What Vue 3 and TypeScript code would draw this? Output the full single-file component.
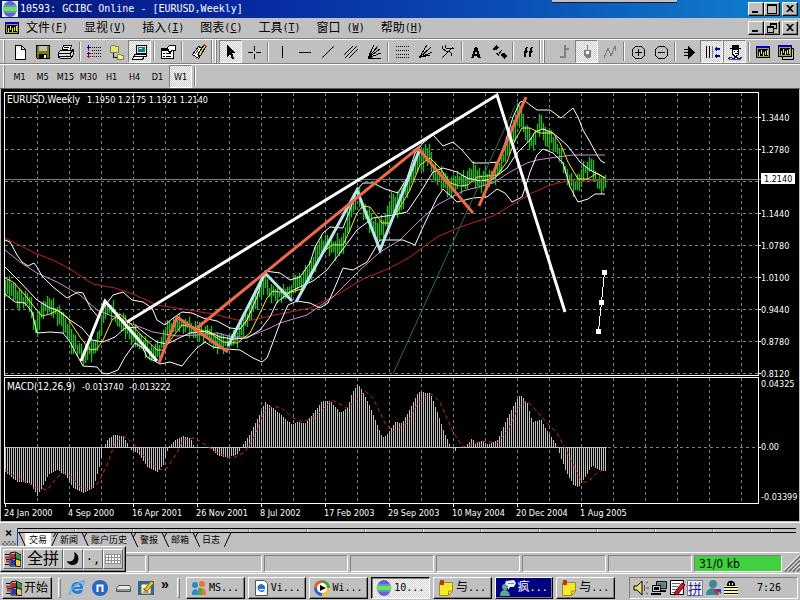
<script setup lang="ts">
interface Shape { d: string; f?: string; s?: string; w?: number }
interface Tool { kind: 'button' | 'sep' | 'wide' | 'grip'; icon?: string; label?: string; on?: boolean }

const K = '#000'
const icons: Record<string, Shape[]> = {
  doc: [{ d: 'M3.5 1.5h6l4 4v9.5h-10z', f: '#fff', s: K }, { d: 'M9.5 1.5v4h4', s: K }],
  save: [{ d: 'M1.5 1.5h13v13h-12l-1-1z', f: '#808000', s: K }, { d: 'M4 2h8v5h-8z', f: '#c0c0c0' }, { d: 'M4 10h8v4h-8z', f: K }, { d: 'M9 11h2v3h-2z', f: '#fff' }],
  print: [{ d: 'M5.5 1.5h8l-2 6h-8z', f: '#fff', s: K }, { d: 'M6 3.5h5M5 5.5h5', s: K }, { d: 'M.5 8.5l2-2h11l2-1v5l-3 4h-10l-2-1.5z', f: '#e0e0e0', s: K }, { d: 'M1 9.5h11l3-3M1 12.5h11v-3', s: K }, { d: 'M8 11h2v1h-2z', f: '#c8c800' }],
  list: [{ d: 'M2.500 1v5M0.500 3.500h4', s: '#00a' }, { d: 'M2.500 5v2M2.500 11v3M0.500 12.500h4', s: '#c00' }, { d: 'M2.500 8v3M0.500 9.500h4', s: '#00a' }, { d: 'M6 3h1v1h-1zM8 3h1v1h-1zM10 3h1v1h-1zM12 3h1v1h-1zM14 3h1v1h-1zM6 6h1v1h-1zM8 6h1v1h-1zM10 6h1v1h-1zM12 6h1v1h-1zM14 6h1v1h-1zM6 9h1v1h-1zM8 9h1v1h-1zM10 9h1v1h-1zM12 9h1v1h-1zM14 9h1v1h-1zM6 12h1v1h-1zM8 12h1v1h-1zM10 12h1v1h-1zM12 12h1v1h-1zM14 12h1v1h-1z', f: K }],
  folders: [{ d: 'M1.5 2.500l1-1h3l1 1h3v6h-8z', f: '#e8e070', s: '#808040' }, { d: 'M4.500 9v4.500h4', s: K }, { d: 'M8.500 11.500l1-1h2l1 1h2v3.500h-6z', f: '#f4ee98', s: '#808040' }],
  computer: [{ d: 'M4.5 1.500h10v8h-10z', f: '#e8e8e8', s: K }, { d: 'M6 3h7v5h-7z', f: '#008080' }, { d: 'M7 4h3v1h-3z', f: '#fff' }, { d: 'M2.500 10.500h12v2h-12zM1.500 12.500h11l-2 2.500h-10z', f: '#fff', s: K }],
  props: [{ d: 'M1.500 4.500h12v10h-12z', f: '#fff', s: K }, { d: 'M2 5h8v2h-8z', f: K }, { d: 'M3 9.500h2M6 9.500h5M3 12.500h2M6 12.500h5', s: K }, { d: 'M7.500 3.500l2-2h6v5h-4l-1 2-2-1z', f: '#fff', s: K }],
  edit: [{ d: 'M1.500 10.500l6-8 6 3-6 9z', f: '#fff', s: K }, { d: 'M4 10l4-5M6 11l4-5M8 12l3-5', s: '#555' }, { d: 'M7 10l6-9 2 1-5 9-3 2z', f: '#e8d820', s: K }, { d: 'M12 1l1-1 3 2-1 2z', f: '#c03030' }],
  cursor: [{ d: 'M4 1v12l3-3 2 5h2v-1l-2-5h4z', f: K }],
  cross: [{ d: 'M8.500 2v5M8.500 10v5M2 8.500h5M10 8.500h5', s: K }],
  vline: [{ d: 'M8.500 2v12', s: K }],
  hline: [{ d: 'M2 8.500h12', s: K }],
  trend: [{ d: 'M2 14L14 2', s: K }],
  channel: [{ d: 'M1 11l9-9M2 14L14 2M6 14l9-9', s: K }],
  fan: [{ d: 'M2 14L8 1M2 14L12 2M2 14L14 5M2 14L15 9M2 14h13M2 14L6 5', s: K }, { d: 'M2 14h4v-3z', f: K }],
  grid: [{ d: 'M1 2h14v1h-14zM1 6h14v1h-14zM1 10h14v1h-14zM1 13h14v1h-14z', f: 'dots' }],
  fan2: [{ d: 'M2 14L10 1M2 14L14 3M2 14L15 8M4 13l9-2', s: K }],
  fork: [{ d: 'M2 14L13 3M2 2l1 3 3 2 3 0 2 2 0 3M5 1l1 3 3 1 5-1', s: K }],
  text: [{ d: 'M3 14L7 3h2l4 11h-3l-.7-2H6.600L6 14zM7 10h2L8 6z', f: K }],
  arrows: [{ d: 'M1 5l4-4 3 3-2 1 0 1H3zM9 11l2-1 0-1 2 0 3 3-3 3z', f: K }, { d: 'M5.500 9l2 2 3-5', s: K }],
  func: [{ d: 'M5 13l2-9 2-1M5 7.500h4M10 13l2-9 2-1M10 7.500h4', s: K }, { d: 'M6 13l2-9M11 13l2-9', s: K }],
  bars: [{ d: 'M8.500 1v13M9 4.500h4M4 12.500h4', s: '#808080', w: 2 }],
  candle: [{ d: 'M8.500 1v14', s: '#808080' }, { d: 'M5 6h7v6l-2 2h-3l-2-2z', f: '#808080' }, { d: 'M7 7h3v3h-3z', f: '#fff' }],
  zigzag: [{ d: 'M2 14l4-10 3 8 4-10 1 5', s: '#808080' }],
  plus: [{ d: 'M5.500 2.500h6l3 3v6l-3 3h-6l-3-3v-6z', s: K }, { d: 'M8.500 5v7M5 8.500h7', s: K }],
  minus: [{ d: 'M5.500 2.500h6l3 3v6l-3 3h-6l-3-3v-6z', s: K }, { d: 'M5 8.500h7', s: K }],
  play: [{ d: 'M7 2l7 6.500-7 6.500z', f: K }, { d: 'M3 5.500h4M3 8.500h4M3 11.500h4', s: K }],
  scroll: [{ d: 'M2.500 2v12M5.500 2v12', s: K }, { d: 'M8.500 2v12', s: '#808080' }, { d: 'M10 5l3-3v2h3v2h-3v2zM10 12l3-3v2h3v2h-3v2z', f: '#000090' }],
  person: [{ d: 'M5 1h7v3h2v1H3V4h2z', f: K }, { d: 'M5.500 5.500h6v5l-2 1.500h-2l-2-2z', f: '#fff', s: K }, { d: 'M7 7h1v1H7zM10 7h1v1h-1zM8 9h3v1H8z', f: K }, { d: 'M1 15l3-2 2 2 3-2 3 2 3-2', s: '#1010a0' }, { d: 'M2 15h12', s: '#4848c0' }],
  chart: [{ d: 'M1.500 2.500h13v11h-13z', f: K, s: K }, { d: 'M1 2h14v2h-14z', f: '#0000d0' }, { d: 'M2.500 4.500h11v8h-11z', f: K, s: '#a0a060' }, { d: 'M4.500 8v4M6.500 6v4M8.500 8v4M10.500 7v4M12.500 6v5', s: '#f0f020' }],
  charts: [{ d: 'M4.500 4.500h11v11h-11z', f: '#c0c0c0', s: K }, { d: 'M.5 1.500h13v11h-13z', f: K, s: K }, { d: 'M0 1h14v2h-14z', f: '#0000d0' }, { d: 'M1.500 3.500h11v8h-11z', s: '#a0a060' }, { d: 'M3.500 7v4M5.500 5v4M7.500 7v4M9.500 6v4M11.500 5v5', s: '#f0f020' }],
  globe: [{ d: 'M8 0a7 8 0 0 1 0 16A7 8 0 0 1 8 0z', f: '#6464c8' }, { d: 'M1 6h14v4H1z', f: '#58f048' }, { d: 'M2 5h12M2 11h12', s: '#8cb0e0' }],
  win: [{ d: 'M6 3l4 0v5l-4 0z', f: '#d02020' }, { d: 'M11 3l4 1v5l-4-1z', f: '#20a030' }, { d: 'M6 9h4v5h-4z', f: '#2030d0' }, { d: 'M11 9l4 1v5l-4-1z', f: '#f0d020' }, { d: 'M5 2l5-1 6 3v12l-5-1-6 0zM10.500 2v13M5 8.500l5-1 6 2', s: K }, { d: 'M0 3.500h4M1 8.500h3M0 13.500h4', s: K, w: 1 }, { d: 'M0 6.500h4M1 10.500h3', s: '#d02020', w: 2 }],
  ie: [{ d: 'M8 2a6 6 0 1 0 6 8h-4a3 3 0 0 1-5-1h9a6 6 0 0 0-6-7zM5 7a3 3 0 0 1 6 0z', f: '#2080d8' }, { d: 'M1 15C-1 11 10 1 15 1c1 0 0 3-1 4', s: '#50b0f0', w: 1.500 }],
  mx: [{ d: 'M8 0a8 8 0 1 1 0 16A8 8 0 0 1 8 0z', f: '#2868c0' }, { d: 'M5.500 12V5.500h5V12', s: '#fff', w: 2 }],
  drive: [{ d: 'M1.500 8.500l2-3h11l1 2v4h-14z', f: '#e8e8e8', s: '#505050' }, { d: 'M2 9h13v2h-13z', f: '#909090' }, { d: 'M12 9h2v1h-2z', f: '#20d020' }],
  desk: [{ d: 'M0 1h16v14H0z', f: '#2868a0' }, { d: 'M3 4h10v10H3z', f: '#fff8d0', s: '#806020' }, { d: 'M5 12h6M5 9h4', s: '#555' }, { d: 'M6 10l7-9 3 2-7 8z', f: '#f0c030', s: '#806010' }],
  msn: [{ d: 'M4 2a3 3 0 1 1 0 6 3 3 0 0 1 0-6M1 15c-1-6 6-9 7 0z', f: '#2888d0' }, { d: 'M11 1a3 3 0 1 1 0 6 3 3 0 0 1 0-6M7 15c-1-9 9-9 8 0z', f: '#e87830' }, { d: 'M7 9c2-3 5 0 4 6H6z', f: '#48a848' }],
  page: [{ d: 'M2.500.5h9l3 3v12h-12z', f: '#fff', s: '#555' }, { d: 'M8 4a4 4 0 1 0 4 6H9a2 2 0 0 1-3-1h6a4 4 0 0 0-4-5', f: '#2070d0' }],
  media: [{ d: 'M8 0a8 8 0 0 1 8 8H8z', f: '#48a040' }, { d: 'M8 0a8 8 0 0 0-8 8h8z', f: '#e06030' }, { d: 'M0 8a8 8 0 0 0 8 8V8z', f: '#2868c0' }, { d: 'M8 16a8 8 0 0 0 8-8H8z', f: '#f0c030' }, { d: 'M8 3a5 5 0 1 1 0 10A5 5 0 0 1 8 3', f: '#fff' }, { d: 'M6 5l6 3-6 3z', f: K }],
  note: [{ d: 'M1.500 2.500h13v9l-4 4h-9z', f: '#f8e828', s: '#a08820' }, { d: 'M10.500 15v-4h4', s: '#a08820' }, { d: 'M2 0h4v5H2z', f: '#c03020' }],
  chat: [{ d: 'M5 4a3 3 0 1 1 0 6 3 3 0 0 1 0-6M0 16c0-8 9-8 10 0z', f: '#58a898' }, { d: 'M6 1l8-1 2 3-2 4-4 0-2 3V6L5 4z', f: '#e8f4ff' }, { d: 'M8 3.500h6', s: '#789' }],
  sound: [{ d: 'M1 6h3l5-5v14l-5-5H1z', f: '#e8e060', s: K }, { d: 'M11.500 5v6M13 3l2-1M13 8h3M13 13l2 1', s: '#505050' }],
  net: [{ d: 'M5.500 1.500h10v7h-10z', f: '#909090', s: K }, { d: 'M7 3h7v4H7z', f: '#40808c' }, { d: 'M1.500 5.500h8v6h-8z', f: '#d0d0d0', s: K }, { d: 'M3 7h5v3H3z', f: K }, { d: 'M0 13h10v2H0zM9 10h6v2H9z', f: K }],
  pad: [{ d: 'M1.500.5h13v14h-13z', f: '#fff', s: K }, { d: 'M3 3.500h8M3 6.500h6M3 9.500h5M3 12.500h4', s: '#666' }, { d: 'M6 12l7-9 3 2-7 9-4 1z', f: '#d01828', s: '#600' }],
  buddy: [{ d: 'M8 0a4 4 0 1 1 0 8 4 4 0 0 1 0-8M1 15c0-9 12-9 13 0z', f: '#388898' }, { d: 'M8 9l7 0-3 6z', f: '#e02020' }, { d: 'M11 9h5v5z', f: '#2040e0' }],
  bee: [{ d: 'M4 6c-1-7 9-7 8 0z', f: K }, { d: 'M6 3h1v2H6zM9 3h1v2H9z', f: '#fff' }, { d: 'M1 6h14v9H1z', f: '#fff8b0' }, { d: 'M1 7.500h14M1 10.500h14M1 13.500h14', s: K, w: 1 }],
  moon: [{ d: 'M9 1c5 2 6 9 2 12-3 2-8 1-9-3 6 2 9-3 7-9z', f: K }],
  keys: [{ d: 'M0 3h16v10H0z', f: '#909090' }, { d: 'M1 5h14M1 8h14M1 11h14', s: '#fff', w: 2 }, { d: 'M3.500 3v10M6.500 3v10M9.500 3v10M12.500 3v10M0 6.500h16M0 9.500h16', s: '#909090' }],
}

const b = (icon: string, label: string, on = false): Tool => ({ kind: 'button', icon, label, on })
const sep: Tool = { kind: 'sep' }
const tools: Tool[] = [
  b('doc', '新图表'), b('save', '保存'), b('print', '打印'), sep,
  b('list', '市场报价'), b('folders', '导航器'), b('computer', '终端', true), sep,
  b('props', '属性'), { kind: 'wide' }, b('edit', '编辑器'), { kind: 'grip' },
  b('cursor', '光标', true), b('cross', '十字线'), sep,
  b('vline', '垂直线'), b('hline', '水平线'), b('trend', '趋势线'), b('channel', '通道'), b('fan', '扇形线'), sep,
  b('grid', '回撤线'), b('fan2', '江恩扇形'), b('fork', '叉形线'), sep,
  b('text', '文字'), b('arrows', '箭头'), sep, b('func', '指标'), { kind: 'grip' }, sep,
  b('bars', '柱状图'), b('candle', '阴阳烛', true), b('zigzag', '折线图'), sep,
  b('plus', '放大'), b('minus', '缩小'), sep,
  b('play', '前进'), b('scroll', '自动滚动', true), b('person', '智能交易', true), sep,
  b('chart', '图表'), b('charts', '图表组'),
]

const menus = [
  ['文件', 'F'], ['显视', 'V'], ['插入', 'I'], ['图表', 'C'], ['工具', 'T'], ['窗口', 'W', ' '], ['帮助', 'H'],
]
const frames = ['M1', 'M5', 'M15', 'M30', 'H1', 'H4', 'D1', 'W1']
const tabs = ['交易', '新闻', '账户历史', '警报', '邮箱', '日志']
const tasks = [
  { icon: 'msn', text: 'MS...' }, { icon: 'page', text: 'Vi...' }, { icon: 'media', text: 'Wi...' },
  { icon: 'globe', text: '10...', state: 'active' }, { icon: 'note', han: '与', text: '...' },
  { icon: 'chat', han: '疯', text: '...', state: 'alert' }, { icon: 'note', han: '与', text: '...' },
]

type Pt = number[]
function lerp(keys: Pt[], x: number, col: number): number {
  for (let i = 1; i < keys.length; i++) {
    if (x <= keys[i][0]) {
      const a = keys[i - 1]
      const c = keys[i]
      return a[col] + ((c[col] - a[col]) * (x - a[0])) / (c[0] - a[0])
    }
  }
  return keys[keys.length - 1][col]
}

// x, high, low
const range: Pt[] = [
  [5, 280, 295], [13, 280, 298], [17, 290, 308], [27, 293, 305], [32, 303, 322], [35, 318, 338], [38, 312, 333], [42, 303, 318], [45, 297, 312],
  [52, 300, 315], [58, 307, 323], [67, 320, 337], [72, 333, 355], [77, 340, 352], [80, 345, 358], [83, 350, 365], [88, 343, 358], [95, 340, 355],
  [100, 323, 338], [105, 303, 316], [112, 303, 315], [118, 312, 327], [125, 318, 335], [133, 327, 343], [143, 337, 352], [150, 346, 359],
  [158, 345, 358], [163, 330, 347], [170, 320, 336], [177, 317, 330], [187, 320, 332], [197, 324, 341], [207, 326, 338], [215, 333, 351],
  [227, 337, 348], [237, 330, 343], [243, 317, 333], [250, 303, 320], [260, 282, 300], [265, 272, 290], [270, 287, 300], [277, 288, 300],
  [287, 288, 299], [295, 275, 290], [303, 273, 287], [312, 257, 277], [320, 237, 253], [327, 238, 250], [335, 240, 257], [343, 233, 253],
  [350, 200, 223], [357, 187, 200], [363, 202, 217], [370, 213, 230], [378, 223, 243], [385, 213, 230], [392, 193, 215], [398, 193, 217],
  [405, 183, 200], [412, 167, 183], [418, 148, 167], [423, 150, 170], [428, 141, 160], [433, 163, 180], [442, 170, 187], [450, 180, 198],
  [458, 172, 188], [465, 175, 190], [472, 163, 180], [478, 170, 190], [488, 172, 187], [497, 166, 178], [507, 140, 157], [515, 112, 137],
  [520, 103, 123], [525, 123, 140], [532, 137, 152], [537, 123, 137], [541, 114, 130], [545, 128, 147], [553, 133, 148], [560, 150, 162],
  [567, 170, 183], [573, 180, 193], [580, 172, 190], [584, 163, 178], [591, 158, 173], [597, 177, 187], [600, 178, 192], [605, 178, 191],
]
const histogram: Pt[] = [
  [5, 472], [17, 482], [30, 483], [37, 496], [43, 485], [48, 475], [57, 470], [65, 475], [72, 487], [83, 493], [93, 488], [100, 463], [103, 447],
  [107, 440], [113, 435], [122, 436], [127, 443], [130, 449], [138, 453], [147, 467], [157, 472], [163, 465], [168, 447], [175, 440], [182, 436],
  [190, 438], [194, 447], [210, 448], [217, 455], [227, 458], [237, 454], [242, 446], [250, 433], [258, 417], [265, 402], [273, 408], [292, 425],
  [297, 422], [305, 423], [313, 413], [322, 401], [330, 401], [340, 413], [347, 408], [352, 392], [358, 384], [363, 393], [370, 407], [377, 425],
  [382, 438], [388, 433], [395, 422], [402, 423], [410, 408], [418, 392], [430, 393], [437, 412], [443, 430], [450, 446], [455, 451], [457, 447],
  [465, 447], [472, 438], [475, 444], [482, 440], [488, 445], [497, 440], [507, 418], [515, 402], [520, 395], [527, 403], [532, 422], [541, 420],
  [545, 428], [555, 443], [558, 450], [565, 470], [573, 485], [578, 488], [585, 477], [592, 465], [598, 470], [605, 471],
]
let priceBars = ''
let macdBars = ''
for (let x = 5, i = 0; x <= 605; x += 2, i++) {
  const up = Math.round(Math.sin(i * 2.3) * 3 + Math.sin(i * 5.1) * 2)
  const down = Math.round(Math.sin(i * 3.7) * 3 + Math.cos(i * 1.9) * 2)
  const top = Math.max(98, Math.round(lerp(range, x, 1)) + up)
  const low = Math.max(top + 5, Math.round(lerp(range, x, 2)) + down)
  priceBars += `M${x} ${top}h1v${low - top}h-1z`
  macdBars += `M${x + 0.5} 447V${Math.round(lerp(histogram, x, 1))}`
}

const curves = [
  { cls: 'red', p: '5,238 23,247 37,254 53,260 70,269 93,284 115,288 133,294 157,305 183,309 213,314 237,320 253,320 270,316 280,314 310,308 340,293 363,279 390,268 410,257 437,237 460,227 493,216 510,206 530,194 550,185 567,181 577,182 587,181 605,180' },
  { cls: 'violet', p: '5,250 20,262 37,273 57,282 80,295 97,310 127,322 153,332 177,336 197,335 217,333 233,337 247,337 258,333 270,328 280,323 307,315 333,297 360,270 380,252 400,240 420,220 437,205 463,191 493,183 510,172 527,163 537,160 557,157 573,155 605,155' },
  { cls: 'band', p: '5,267 20,282 37,300 50,308 57,310 70,320 82,328 92,340 103,342 115,337 125,328 137,327 147,335 157,342 167,344 177,339 190,333 207,331 220,337 233,339 247,338 260,330 270,317 277,302 293,290 313,281 327,270 340,253 357,230 373,218 393,215 407,212 420,193 433,172 443,168 457,172 467,178 480,181 493,179 507,168 517,153 530,140 535,132 543,129 553,133 567,145 580,162 590,170 605,178' },
  { cls: 'band', p: '5,240 10,242 17,255 22,262 28,266 34,263 37,267 42,276 53,287 67,298 78,292 83,293 90,307 98,317 107,303 113,295 123,292 132,300 143,302 152,308 157,320 165,325 173,318 182,312 192,313 203,318 217,321 230,328 240,329 247,320 257,297 265,271 280,273 290,280 300,277 310,263 315,247 323,233 330,227 343,228 350,210 357,190 363,183 373,183 385,189 398,193 407,178 415,153 423,143 433,135 443,146 453,142 462,150 473,163 487,163 498,162 505,143 513,117 520,102 525,101 530,105 537,110 550,110 561,118 573,108 578,117 583,130 590,142 597,155 601,161 605,163' },
  { cls: 'band', p: '5,294 15,302 25,303 32,312 37,333 50,332 63,333 70,342 78,357 83,366 97,367 102,373 108,374 118,370 125,357 135,343 143,348 147,357 160,364 170,362 182,366 188,358 197,348 205,342 213,347 227,349 240,350 253,358 262,362 267,358 273,342 280,323 288,305 297,301 310,303 320,308 328,303 335,287 343,268 353,270 367,262 380,240 403,240 415,245 423,227 437,198 443,189 457,202 473,198 487,197 497,189 505,193 512,202 522,197 527,182 530,172 537,155 543,149 553,153 563,163 570,187 578,202 588,199 595,194 605,194' },
  { cls: 'yellow', p: '5,278 13,282 25,295 35,308 42,316 50,314 58,310 67,317 80,337 90,350 97,349 103,340 112,320 120,314 130,323 143,337 157,350 163,350 172,338 182,325 193,327 213,335 223,342 237,343 250,333 260,313 267,298 273,291 287,293 302,289 313,273 322,253 332,245 343,245 350,230 357,213 363,206 370,207 382,223 390,223 400,207 410,190 420,165 430,158 440,168 450,183 460,186 468,185 477,177 497,175 507,162 515,140 522,128 530,128 540,133 553,133 560,143 568,162 578,179 588,179 597,173 605,178' },
  { cls: 'green', p: '393,374 515,106' },
  { cls: 'thick', p: '81,361 105,301 157,361' },
  { cls: 'thick tomato', p: '159,363 177,317 228,352' },
  { cls: 'thick pale', p: '228,346 265,273 292,301' },
  { cls: 'thick pale', p: '296,302 357,190 380,250 419,151' },
  { cls: 'thick tomato', p: '197,328 418,148 473,213' },
  { cls: 'thick tomato', p: '479,206 526,97' },
  { cls: 'thick', p: '127,322 497,95 565,312' },
  { cls: 'signal', p: '5,470 17,478 27,482 35,487 47,490 55,480 63,472 72,477 80,487 90,489 98,483 107,465 115,443 123,436 132,442 143,455 160,470 167,468 177,453 183,440 195,438 207,446 220,454 233,458 245,452 255,435 264,412 270,407 280,407 293,418 303,422 315,417 332,400 347,408 355,402 365,391 373,398 385,423 393,432 407,423 418,403 430,393 440,402 453,432 463,447 482,441 497,443 508,430 518,408 527,401 533,407 547,423 557,433 567,452 582,482 588,482 598,472 605,469' },
]
const gridX = Array.from({ length: 23 }, (_, i) => 37.5 + i * 32)
const gridY = Array.from({ length: 9 }, (_, i) => 117.5 + i * 32)
const prices = ['1.3440', '1.2780', '', '1.1440', '1.0780', '1.0100', '0.9440', '0.8780', '0.8120']
const dates = ['24 Jan 2000', '4 Sep 2000', '16 Apr 2001', '26 Nov 2001', '8 Jul 2002', '17 Feb 2003', '29 Sep 2003', '10 May 2004', '20 Dec 2004', '1 Aug 2005']
</script>

<template>
  <main class="desktop">
    <svg class="defs" aria-hidden="true"><pattern id="dots" width="2" height="2" patternUnits="userSpaceOnUse"><rect width="1" height="2" /></pattern></svg>
    <header class="title">
      <svg class="ico logo" viewBox="0 0 16 16"><path v-for="(p, i) in icons.globe" :key="i" :d="p.d" :fill="p.f || 'none'" :stroke="p.s || 'none'" /></svg>
      <h1>10593: GCIBC Online - [EURUSD,Weekly]</h1>
      <span class="edge"></span>
      <div class="winbtns">
        <button aria-label="最小化"><svg viewBox="0 0 12 10"><path d="M2 7h6v2H2z" /></svg></button>
        <button aria-label="最大化"><svg viewBox="0 0 12 10"><path d="M1 0h10v10H1zM2 2v7h8V2z" fill-rule="evenodd" /></svg></button>
        <button aria-label="关闭" class="close"><svg viewBox="0 0 12 10"><path d="M2 1h2l2 2 2-2h2L7 4.500 10 8H8L6 6 4 8H2l3-3.500z" /></svg></button>
      </div>
    </header>

    <nav class="menu">
      <svg class="ico" viewBox="0 0 16 16"><path v-for="(p, i) in icons.chart" :key="i" :d="p.d" :fill="p.f || 'none'" :stroke="p.s || 'none'" /></svg>
      <button v-for="m in menus" :key="m[0]">{{ m[0] }}<span class="key">{{ m[2] || '' }}(<u>{{ m[1] }}</u>)</span></button>
      <div class="winbtns">
        <button aria-label="最小化图表"><svg viewBox="0 0 12 10"><path d="M2 7h6v2H2z" /></svg></button>
        <button aria-label="还原图表"><svg viewBox="0 0 12 10"><path d="M4 0h7v6H8v4H1V3h3zM5 2v1h3v2h2V2zM2 5v4h5V5z" fill-rule="evenodd" /></svg></button>
        <button aria-label="关闭图表" class="close"><svg viewBox="0 0 12 10"><path d="M2 1h2l2 2 2-2h2L7 4.500 10 8H8L6 6 4 8H2l3-3.500z" /></svg></button>
      </div>
    </nav>

    <div class="bar tools" role="toolbar" aria-label="工具栏">
      <template v-for="(t, n) in tools" :key="n">
        <button v-if="t.kind === 'button'" :class="{ on: t.on }" :aria-label="t.label" :aria-pressed="t.on">
          <svg class="ico" viewBox="0 0 16 16"><path v-for="(p, i) in icons[t.icon!]" :key="i" :d="p.d" :fill="p.f === 'dots' ? 'url(#dots)' : p.f || 'none'" :stroke="p.s || 'none'" :stroke-width="p.w || 1" /></svg>
        </button>
        <span v-else :class="t.kind"></span>
      </template>
    </div>

    <div class="bar frames" role="toolbar" aria-label="周期">
      <button v-for="f in frames" :key="f" :class="{ on: f === 'W1' }">{{ f }}</button>
      <span class="sep"></span>
    </div>

    <svg class="plot" viewBox="0 89 800 433" role="img" aria-label="EURUSD Weekly">
      <rect x="0" y="89" width="800" height="433" fill="#c0c0c0" />
      <rect x="1" y="89" width="798" height="432" fill="#000" />
      <g class="grid">
        <path v-for="x in gridX" :key="x" :d="`M${x} 93V375M${x} 378V503`" />
        <path v-for="y in gridY" :key="y" :d="`M5 ${y}H758`" />
        <path d="M608 447.500H758" />
      </g>
      <path class="level" d="M5 179.500H762" />
      <path class="candles" :d="priceBars" />
      <path class="macdbars" :d="macdBars + 'M5 447.500H607'" />
      <polyline v-for="(c, i) in curves" :key="i" :class="['curve', c.cls]" :points="c.p" />
      <path class="frame" d="M598.500 331L601.500 302L604.500 272" />
      <path d="M596 329h5v5h-5zM599 300h5v5h-5zM602 270h5v5h-5z" fill="#fff" />
      <path class="frame" d="M4.500 92.500H758.500V375.500H4.500zM4.500 377.500H758.500V503.500H4.500z" />
      <path class="frame" d="M758 117.500h3M758 149.500h3M758 213.500h3M758 245.500h3M758 277.500h3M758 309.500h3M758 341.500h3M758 373.500h3M758 447.500h3" />
      <path v-for="(d, i) in dates" :key="d" class="frame" :d="`M${5.500 + i * 64} 503v4`" />
      <g class="labels">
        <text x="7" y="103" class="name">EURUSD,Weekly</text>
        <text x="87" y="103">1.1950 1.2175 1.1921 1.2140</text>
        <text x="7" y="390" class="name">MACD(12,26,9)</text>
        <text x="82" y="390">-0.013740</text>
        <text x="129" y="390">-0.013222</text>
        <text v-for="(p, i) in prices" :key="i" x="761" :y="121 + i * 32">{{ p }}</text>
        <rect x="761" y="173" width="34" height="11" fill="#fff" />
        <text x="764" y="182" class="now">1.2140</text>
        <text x="761" y="387">0.04325</text>
        <text x="761" y="450">0.00</text>
        <text x="761" y="500">-0.03399</text>
        <text v-for="(d, i) in dates" :key="d" :x="4 + i * 64" y="516">{{ d }}</text>
      </g>
    </svg>

    <section class="terminal">
      <div class="side"><button aria-label="关闭终端">×</button><span></span></div>
      <div class="book">
        <div class="strip"></div>
        <div class="tabs" role="tablist">
          <button v-for="(t, i) in tabs" :key="t" role="tab" :aria-selected="i === 0" :class="{ first: i === 0 }">{{ t }}</button>
        </div>
      </div>
    </section>

    <div class="bottom">
      <div class="ime">
        <span class="cell"><svg class="ico" viewBox="0 0 16 16"><path v-for="(p, i) in icons.win" :key="i" :d="p.d" :fill="p.f || 'none'" :stroke="p.s || 'none'" :stroke-width="p.w || 1" /></svg></span>
        <span class="cell pinyin">全拼</span>
        <span class="cell"><svg class="ico" viewBox="0 0 16 16"><path v-for="(p, i) in icons.moon" :key="i" :d="p.d" :fill="p.f" /></svg></span>
        <span class="cell punct">·,</span>
        <span class="cell"><svg class="ico" viewBox="0 0 16 16"><path v-for="(p, i) in icons.keys" :key="i" :d="p.d" :fill="p.f || 'none'" :stroke="p.s || 'none'" :stroke-width="p.w || 1" /></svg></span>
      </div>
      <footer class="status">
        <span class="help"></span><span class="profile"></span><span v-for="n in 5" :key="n" class="pane"></span>
        <span class="traffic">31/0 kb</span>
        <svg class="size" viewBox="0 0 16 16"><path d="M1 16L16 1M5 16L16 5M9 16l7-7M13 16l3-3" stroke="#707070" stroke-width="2" /><path d="M0 15L15 0M4 15L16 3M8 15l8-8M12 15l4-4" stroke="#fff" /></svg>
      </footer>
    </div>

    <footer class="taskbar">
      <button class="start"><svg class="ico" viewBox="0 0 16 16"><path v-for="(p, i) in icons.win" :key="i" :d="p.d" :fill="p.f || 'none'" :stroke="p.s || 'none'" :stroke-width="p.w || 1" /></svg>开始</button>
      <span class="handle"></span>
      <div class="quick">
        <button v-for="q in ['ie', 'mx', 'drive', 'desk']" :key="q" :aria-label="q"><svg class="ico" viewBox="0 0 16 16"><path v-for="(p, i) in icons[q]" :key="i" :d="p.d" :fill="p.f || 'none'" :stroke="p.s || 'none'" :stroke-width="p.w || 1" /></svg></button>
        <button class="more">»</button>
      </div>
      <span class="handle"></span>
      <div class="tasks">
        <button v-for="(t, n) in tasks" :key="n" :class="t.state"><svg class="ico" viewBox="0 0 16 16"><path v-for="(p, i) in icons[t.icon]" :key="i" :d="p.d" :fill="p.f || 'none'" :stroke="p.s || 'none'" :stroke-width="p.w || 1" /></svg><span>{{ t.han }}<span class="key">{{ t.text }}</span></span></button>
      </div>
      <div class="tray">
        <svg v-for="q in ['sound', 'net', 'pad']" :key="q" class="ico" viewBox="0 0 16 16"><path v-for="(p, i) in icons[q]" :key="i" :d="p.d" :fill="p.f || 'none'" :stroke="p.s || 'none'" /></svg>
        <span class="pin">拼</span>
        <svg v-for="q in ['buddy', 'bee']" :key="q" class="ico" viewBox="0 0 16 16"><path v-for="(p, i) in icons[q]" :key="i" :d="p.d" :fill="p.f || 'none'" :stroke="p.s || 'none'" /></svg>
        <time>7:26</time>
      </div>
    </footer>
  </main>
</template>

<style>
body { background: #c0c0c0; }
</style>

<style scoped>
.desktop { display: flex; flex-direction: column; background: #c0c0c0; color: #000; font: 12px/14px "DejaVu Sans Mono", "Noto Sans CJK SC", monospace; overflow: hidden; }
.desktop * { box-sizing: border-box; }
.defs { position: absolute; width: 0; height: 0; }
button { padding: 0; border: 0; background: none; color: inherit; font: inherit; }
.ico { width: 16px; height: 16px; flex: none; display: block; }
.title { position: relative; display: flex; align-items: center; height: 18px; padding: 0 2px; gap: 2px; background: linear-gradient(90deg, #04187c 0%, #0828a0 30%, #0a4cb4 62%, #1084d0 100%); color: #fff; }
.title h1 { margin: 0; font-size: 10px; line-height: 14px; font-weight: 400; }
.logo { background: #e8ecf8; }
.edge { position: absolute; top: 0; left: 69%; width: 125px; height: 3px; background: #c0c0c0; border-bottom: 1px solid #101830; }
.winbtns { display: flex; margin-left: auto; }
.winbtns button { width: 16px; height: 14px; padding: 1px; background: #c0c0c0; border: 1px solid; border-color: #fff #000 #000 #fff; box-shadow: inset -1px -1px #808080; }
.winbtns svg { display: block; width: 12px; height: 10px; }
.winbtns .close { margin-left: 2px; }
.menu { display: flex; align-items: center; gap: 16px; height: 21px; padding: 0 2px 0 4px; border-bottom: 1px solid #808080; }
.menu > .ico { margin-right: -10px; }
.menu > button { display: flex; align-items: center; white-space: pre; }
.key { font-size: 10px; }
.bar { display: flex; align-items: center; height: 25px; padding-left: 8px; border-top: 1px solid #fff; border-bottom: 1px solid #808080; box-shadow: inset 3px 0 #c0c0c0, inset 4px 0 #fff, inset 5px 0 #808080; }
.bar button { display: grid; place-items: center; flex: none; width: 23px; height: 23px; }
.bar .on { border: 1px solid; border-color: #808080 #fff #fff #808080; background: repeating-conic-gradient(#fff 0 25%, #c8c8c8 0 50%) 0 0 / 2px 2px; }
.tools .ico { shape-rendering: crispEdges; }
.sep, .wide { flex: none; width: 5px; height: 19px; background: linear-gradient(90deg, transparent 2px, #808080 2px 3px, #fff 3px 4px, transparent 4px); }
.wide { width: 8px; }
.grip { flex: none; width: 9px; height: 23px; background: linear-gradient(90deg, transparent 1px, #808080 1px 2px, #fff 2px 3px, transparent 3px 5px, #fff 5px 6px, #808080 6px 7px, transparent 7px); }
.grip + .sep { background: none; }
.frames { font: 9px/12px "DejaVu Sans Condensed", "DejaVu Sans", sans-serif; border-bottom-color: #606060; }
.plot { display: block; width: 100%; height: auto; }
.grid path, .level, .macdbars, .frame { fill: none; shape-rendering: crispEdges; }
.grid { stroke: #748492; stroke-dasharray: 3 3; }
.level { stroke: #708090; }
.candles { fill: #2ee02e; stroke: #1c8a1c; stroke-width: 0.5px; }
.macdbars { stroke: #c0c0c0; }
.frame { stroke: #fff; }
.curve { fill: none; stroke: #fff; stroke-width: 1; }
.red { stroke: #c81e1e; }
.violet { stroke: #d48ad8; }
.yellow { stroke: #f0f020; }
.green { stroke: #2e7048; }
.thick { stroke-width: 3; }
.tomato { stroke: #f0684a; }
.pale { stroke: #b8e4ec; }
.signal { stroke: #d82030; stroke-dasharray: 4 3; }
.labels { fill: #fff; font: 9px "DejaVu Sans Condensed", "DejaVu Sans", sans-serif; }
.labels .name { font-size: 10px; }
.labels .now { fill: #000; }
.terminal { display: flex; height: 30px; border-top: 1px solid #fff; padding: 5px 4px 0 0; }
.side { width: 17px; display: flex; flex-direction: column; align-items: center; }
.side button { height: 10px; font-size: 12px; line-height: 10px; font-weight: 700; }
.side span { width: 14px; height: 6px; margin-top: 3px; background: repeating-conic-gradient(#808080 0 25%, #b0b0b0 0 50%) 0 0 / 4px 4px; }
.book { flex: 1; border-left: 1px solid #2038a0; height: 19px; }
.strip { height: 5px; border-top: 1px solid #000; border-bottom: 1px solid #000; background: repeating-linear-gradient(90deg, #c0c0c0 0 56px, #808080 56px 57px, #fff 57px 58px); }
.tabs { display: flex; font-size: 9px; line-height: 14px; }
.tabs button { position: relative; height: 14px; padding: 0 7px 0 6px; }
.tabs button + button::before { content: ""; position: absolute; top: 0; left: 0; width: 1px; height: 4px; background: #000; transform: skewX(-30deg); }
.tabs button::after { content: ""; position: absolute; top: 0; right: -1px; width: 1px; height: 14px; background: #000; transform: skewX(25deg); }
.tabs .first { padding: 0 7px 0 11px; background: linear-gradient(#fff, #fff) 7px 0 / 26px 100% no-repeat; }
.tabs .first::before { content: ""; position: absolute; top: 0; left: 4px; width: 1px; height: 14px; background: #000; transform: skewX(25deg); }
.tabs .first::after, .tabs button:last-child::after { transform: skewX(-25deg); }
.bottom { position: relative; }
.ime { position: absolute; left: 0; top: -6px; display: flex; height: 26px; padding: 2px; background: #c0c0c0; border: 1px solid; border-color: #fff #000 #000 #fff; box-shadow: inset -1px -1px #808080; }
.cell { display: grid; place-items: center; width: 20px; border: 1px solid; border-color: #fff #606060 #606060 #fff; }
.pinyin { width: 40px; font-size: 16px; line-height: 18px; }
.status { display: flex; gap: 2px; height: 21px; padding: 2px 0 1px; border-top: 1px solid #fff; }
.status > span { border: 1px solid; border-color: #808080 #fff #fff #808080; }
.help { width: 146px; }
.profile { width: 114px; }
.pane { flex: 1; }
.status .traffic { width: 88px; padding-left: 4px; background: #40d040; font: 12px/16px "DejaVu Sans Condensed", "DejaVu Sans", sans-serif; }
.size { width: 16px; height: 17px; }
.taskbar { display: flex; align-items: center; height: 27px; padding: 1px 2px 0; border-top: 1px solid #fff; }
.start, .tasks button { display: flex; align-items: center; height: 22px; background: #c0c0c0; border: 1px solid; border-color: #fff #000 #000 #fff; box-shadow: inset -1px -1px #808080; }
.start { width: 50px; padding-left: 3px; gap: 2px; }
.handle { width: 3px; height: 20px; margin: 0 6px; border: 1px solid; border-color: #fff #808080 #808080 #fff; }
.quick { display: flex; align-items: center; gap: 7px; width: 104px; padding-left: 2px; }
.more { font: 700 14px/14px "Liberation Sans", sans-serif; margin-top: -8px; }
.tasks { flex: 1; display: flex; gap: 3px; min-width: 0; }
.tasks button { flex: 1; min-width: 0; padding: 0 4px; gap: 2px; font-size: 12px; white-space: nowrap; }
.tasks .active { border-color: #000 #fff #fff #000; box-shadow: inset 1px 1px #808080; background: repeating-conic-gradient(#fff 0 25%, #d0d0d0 0 50%) 0 0 / 2px 2px; }
.tasks .alert { background: #000080; color: #fff; }
.tray { display: flex; align-items: center; gap: 2px; width: 169px; height: 22px; margin-left: 14px; padding: 0 16px 0 3px; border: 1px solid; border-color: #808080 #fff #fff #808080; }
.pin { width: 16px; height: 16px; background: #f4f4ff; color: #1818a0; font-size: 14px; line-height: 16px; text-align: center; border: 1px solid #808080; }
.tray time { margin-left: auto; font-size: 10px; }
</style>
